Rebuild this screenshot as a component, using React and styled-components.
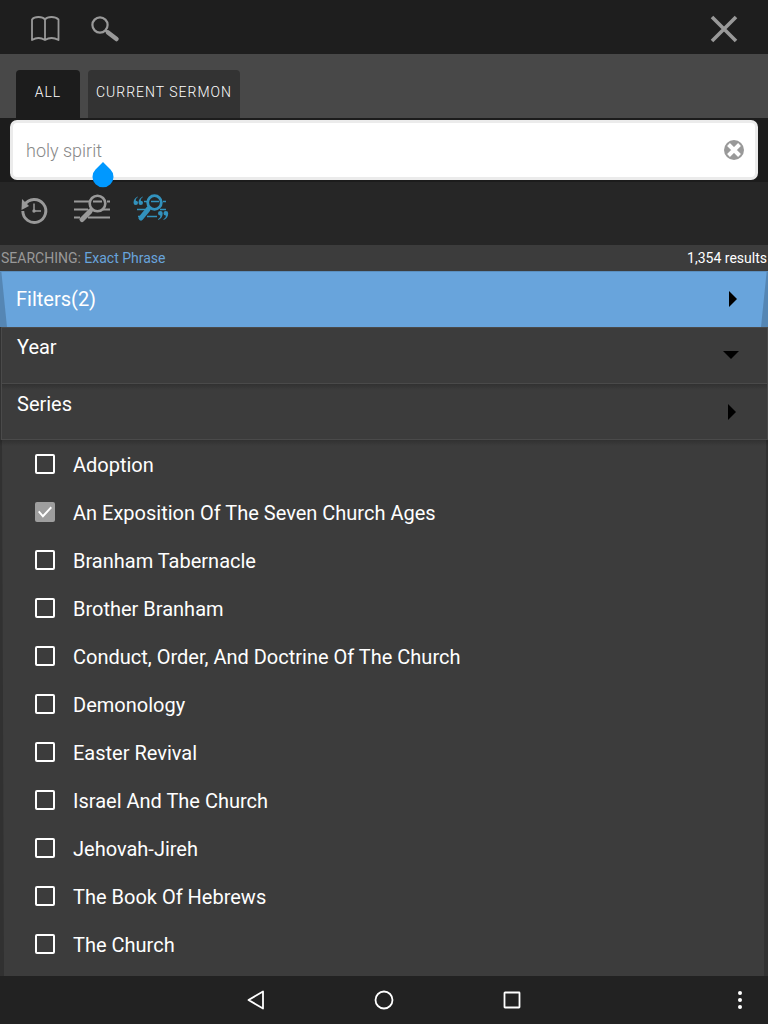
import React, { useState } from "react"
import styled, { createGlobalStyle, css } from "styled-components"

const GlobalStyle = createGlobalStyle`
  * {
    box-sizing: border-box;
  }
  body {
    margin: 0;
    background: #3c3c3c;
    color: #fff;
    font-family: Roboto, "Liberation Sans", sans-serif;
  }
  button, input {
    font-family: inherit;
  }
`

const Page = styled.div`
  display: flex;
  flex-direction: column;
  min-height: 100vh;
`

const TopBar = styled.header`
  display: flex;
  align-items: center;
  height: 54px;
  padding: 4px 28px 0;
  gap: 26px;
  background: #1e1e1e;
`

const IconButton = styled.button`
  display: flex;
  padding: 0;
  border: none;
  background: none;
  color: ${props => (props.$active ? "#3292bd" : "#999")};
  cursor: pointer;
  &:last-child {
    margin-left: ${props => (props.$end ? "auto" : "0")};
  }
`

const Tabs = styled.nav`
  display: flex;
  gap: 8px;
  padding: 16px 16px 0;
  background: #484848;
`

const Tab = styled.button`
  height: 48px;
  min-width: 64px;
  padding: 0 8px 4px;
  border: none;
  border-radius: 4px 4px 0 0;
  background: ${props => (props.$active ? "#1c1c1c" : "#333")};
  color: #fff;
  font-size: 14px;
  font-weight: 300;
  letter-spacing: 1px;
  text-transform: uppercase;
`

const SearchArea = styled.div`
  padding: 2px 10px;
  background: #1c1c1c;
`

const SearchField = styled.div`
  position: relative;
  display: flex;
  align-items: center;
  height: 60px;
  padding: 0 10px 0 13px;
  border: 3px solid #ebebeb;
  border-radius: 7px;
  background: #fff;
`

const SearchInput = styled.input`
  flex: 1;
  min-width: 0;
  padding: 0;
  border: none;
  outline: none;
  background: none;
  color: #888;
  font-size: 18px;
  font-weight: 300;
`

const CursorHandle = styled.svg`
  position: absolute;
  top: 39px;
  left: 79px;
  z-index: 1;
`

const Tools = styled.div`
  display: flex;
  align-items: flex-start;
  gap: 22px;
  height: 63px;
  padding: 11px 19px 0;
  background: #262626;
`

const Status = styled.div`
  display: flex;
  justify-content: space-between;
  height: 26px;
  padding: 0 1px;
  color: #999;
  font-size: 14px;
  line-height: 26px;
`

const Mode = styled.span`
  color: #68a4dc;
`

const Results = styled.span`
  color: #fff;
`

const edges = css`
  position: relative;
  &::before,
  &::after {
    content: "";
    position: absolute;
    top: 0;
    bottom: 0;
    left: 0;
    width: ${props => props.$edge}px;
    background: rgba(0, 0, 0, 0.18);
    clip-path: polygon(0 0, ${props => props.$top} 0, 100% 100%, 0 100%);
  }
  &::after {
    left: auto;
    right: 0;
    transform: scaleX(-1);
  }
`

const FilterBar = styled.button`
  ${edges}
  display: flex;
  align-items: center;
  justify-content: space-between;
  height: 56px;
  padding: 0 28px 2px 16px;
  border: none;
  border-top: 1px solid #5b8fbf;
  background: #68a4dc;
  color: #fff;
  font-size: 20px;
`

const Section = styled.button`
  display: flex;
  justify-content: space-between;
  height: ${props => (props.$first ? "57px" : "56px")};
  margin: 0 0 0 1px;
  padding: ${props => (props.$first ? "7px" : "8px")} 28px 0 15px;
  border: 1px solid #4a4a4a;
  border-width: ${props => (props.$first ? "1px" : "0 1px 1px")};
  background: ${props =>
    props.$first ? "#3c3c3c" : "linear-gradient(#313131, #3c3c3c 6px)"};
  color: #fff;
  font-size: 20px;
  line-height: 24px;
  text-align: left;
  svg {
    margin-top: 12px;
  }
`

const SectionGroup = styled.div`
  display: flex;
  flex-direction: column;
  background: #323232;
`

const SeriesList = styled.ul`
  ${edges}
  flex: 1;
  margin: 0;
  padding: 0 0 8px;
  list-style: none;
  background: linear-gradient(#313131, #3c3c3c 6px);
`

const SeriesItem = styled.label`
  display: flex;
  align-items: center;
  gap: 18px;
  height: 48px;
  padding-left: 35px;
  font-size: 20px;
  line-height: 24px;
  cursor: pointer;
`

const SeriesName = styled.span`
  padding-top: 2px;
`

const Checkbox = styled.input`
  display: grid;
  place-items: center;
  width: 20px;
  height: 20px;
  margin: 0;
  appearance: none;
  border: 2px solid #fff;
  border-radius: 2px;
  &:checked {
    border-color: #9e9e9e;
    background: #9e9e9e;
  }
  &:checked::before {
    content: "";
    width: 14px;
    height: 12px;
    background: #fff;
    clip-path: polygon(0 50%, 10% 40%, 35% 72%, 90% 5%, 100% 16%, 35% 97%);
  }
`

const SystemBar = styled.footer`
  display: grid;
  grid-template-columns: 1fr repeat(3, 128px) 1fr;
  place-items: center;
  height: 48px;
  background: #222;
  color: #fff;
  button {
    color: #fff;
  }
  button:first-child {
    grid-column: 2;
  }
  button:last-child {
    justify-self: end;
    margin-right: 16px;
  }
`

const BookIcon = () => (
  <svg width="34" height="30" viewBox="0 0 34 30" fill="none" stroke="currentColor" strokeWidth="1.8" strokeLinejoin="round">
    <path d="M17 5.500C15.500 3.500 13 3 10.500 3C8 3 5.500 3.500 4 5.500V26C8 23.500 13 23.500 17 26C21 23.500 26 23.500 30.500 26V5.500C28.500 3.500 26 3 23.500 3C21 3 18.500 3.500 17 5.500V26" />
  </svg>
)

const SearchIcon = () => (
  <svg width="32" height="30" viewBox="0 0 32 30" fill="none" stroke="currentColor">
    <circle cx="12" cy="11" r="7.6" strokeWidth="2.200" />
    <path d="M17.500 16.500L20 18.500" strokeWidth="2.500" />
    <path d="M20 18.500L28.500 25" strokeWidth="4.500" strokeLinecap="round" />
  </svg>
)

const CloseIcon = () => (
  <svg width="32" height="32" viewBox="0 0 32 32" stroke="currentColor" strokeWidth="3.600">
    <path d="M4 4L28 28M28 4L4 28" />
  </svg>
)

const ClearIcon = () => (
  <svg width="22" height="22" viewBox="0 0 22 22">
    <circle cx="11" cy="11" r="10" fill="currentColor" />
    <path d="M5.500 5.500L16.500 16.500M16.500 5.500L5.500 16.500" stroke="#fff" strokeWidth="4" />
  </svg>
)

const HistoryIcon = () => (
  <svg width="32" height="34" viewBox="0 0 32 34" fill="none" stroke="currentColor">
    <path d="M5.600 11.800A11.500 11.500 0 1 1 3.800 18" strokeWidth="2.900" />
    <path d="M3 6L10 13L2.500 17Z" fill="currentColor" stroke="none" />
    <path d="M15 10.500V18M15 18H22" strokeWidth="1.500" />
    <circle cx="15" cy="18" r="1.700" fill="currentColor" stroke="none" />
  </svg>
)

const LinesSearchIcon = () => (
  <svg width="38" height="34" viewBox="0 0 38 34" fill="none" stroke="currentColor">
    <path d="M1 8.500H16M20 8.500H29M34 8.500H37M1 16.500H15M30 16.500H37M1 24.500H7M15 24.500H37" strokeWidth="1.800" />
    <circle cx="24.500" cy="10.500" r="7.800" strokeWidth="2.600" />
    <path d="M19 16L16.500 18.500" strokeWidth="4" />
    <path d="M17 18.500L9 26.500" strokeWidth="5" strokeLinecap="round" />
  </svg>
)

const Quote = ({ transform }) => (
  <path
    transform={transform}
    d="M0 2.300A2.300 2.300 0 0 1 4.700 2.300C4.800 5.500 3 8 0 9V8.300C1.800 7.200 2.600 5.800 2.300 4.600A2.300 2.300 0 0 1 0 2.300Z"
    fill="currentColor"
    stroke="none"
  />
)

const PhraseSearchIcon = () => (
  <svg width="38" height="34" viewBox="0 0 38 34" fill="none" stroke="currentColor">
    <path d="M11 8.500H14M18 8.500H26M30 8.500H33M4 16.500H14M27 16.500H33M5 23.500H7M14 23.500H24" strokeWidth="1.600" />
    <circle cx="21.500" cy="9.500" r="6.800" strokeWidth="2.800" />
    <path d="M16.500 14.500L14 17" strokeWidth="4" />
    <path d="M15 16.500L8 25" strokeWidth="5" strokeLinecap="round" />
    <Quote transform="translate(5 12) rotate(180) scale(0.95)" />
    <Quote transform="translate(10 12) rotate(180) scale(0.95)" />
    <Quote transform="translate(25 18)" />
    <Quote transform="translate(30.500 18)" />
  </svg>
)

const Caret = ({ down }) =>
  down ? (
    <svg width="16" height="16" viewBox="0 0 16 16">
      <path d="M0 4H16L8 12Z" />
    </svg>
  ) : (
    <svg width="16" height="16" viewBox="0 0 16 16">
      <path d="M5 0V16L13 8Z" />
    </svg>
  )

const SERIES = [
  "Adoption",
  "An Exposition Of The Seven Church Ages",
  "Branham Tabernacle",
  "Brother Branham",
  "Conduct, Order, And Doctrine Of The Church",
  "Demonology",
  "Easter Revival",
  "Israel And The Church",
  "Jehovah-Jireh",
  "The Book Of Hebrews",
  "The Church",
]

const App = () => {
  const [query, setQuery] = useState("holy spirit")

  return (
    <Page>
      <GlobalStyle />
      <TopBar>
        <IconButton aria-label="Library"><BookIcon /></IconButton>
        <IconButton aria-label="Search"><SearchIcon /></IconButton>
        <IconButton aria-label="Close" $end><CloseIcon /></IconButton>
      </TopBar>
      <Tabs>
        <Tab $active>All</Tab>
        <Tab>Current Sermon</Tab>
      </Tabs>
      <SearchArea>
        <SearchField>
          <SearchInput
            aria-label="Search text"
            value={query}
            onChange={e => setQuery(e.target.value)}
          />
          <IconButton aria-label="Clear" onClick={() => setQuery("")}>
            <ClearIcon />
          </IconButton>
          <CursorHandle width="22" height="26" viewBox="0 0 22 26">
            <path d="M11 0L18.500 7.500A10.500 10.500 0 1 1 3.500 7.500Z" fill="#0098ff" />
          </CursorHandle>
        </SearchField>
      </SearchArea>
      <Tools>
        <IconButton aria-label="History"><HistoryIcon /></IconButton>
        <IconButton aria-label="All words"><LinesSearchIcon /></IconButton>
        <IconButton aria-label="Exact phrase" $active><PhraseSearchIcon /></IconButton>
      </Tools>
      <Status>
        <span>SEARCHING: <Mode>Exact Phrase</Mode></span>
        <Results>1,354 results</Results>
      </Status>
      <FilterBar $edge={7} $top="20%">
        Filters(2)
        <Caret />
      </FilterBar>
      <SectionGroup>
        <Section $first>
          Year
          <Caret down />
        </Section>
        <Section>
          Series
          <Caret />
        </Section>
      </SectionGroup>
      <SeriesList $edge={4} $top="50%">
        {SERIES.map(name => (
          <li key={name}>
            <SeriesItem>
              <Checkbox type="checkbox" defaultChecked={name.startsWith("An Exposition")} />
              <SeriesName>{name}</SeriesName>
            </SeriesItem>
          </li>
        ))}
      </SeriesList>
      <SystemBar>
        <IconButton aria-label="Back">
          <svg width="20" height="20" viewBox="0 0 20 20" fill="none" stroke="currentColor" strokeWidth="1.800" strokeLinejoin="round">
            <path d="M17 1.500V18.500L2.500 10Z" />
          </svg>
        </IconButton>
        <IconButton aria-label="Home">
          <svg width="20" height="20" viewBox="0 0 20 20" fill="none" stroke="currentColor" strokeWidth="1.800">
            <circle cx="10" cy="10" r="8.500" />
          </svg>
        </IconButton>
        <IconButton aria-label="Recent apps">
          <svg width="20" height="20" viewBox="0 0 20 20" fill="none" stroke="currentColor" strokeWidth="1.800">
            <rect x="2.500" y="2.500" width="15" height="15" rx="0.500" />
          </svg>
        </IconButton>
        <IconButton aria-label="More options">
          <svg width="24" height="24" viewBox="0 0 24 24" fill="currentColor">
            <circle cx="12" cy="5" r="2" />
            <circle cx="12" cy="12" r="2" />
            <circle cx="12" cy="19" r="2" />
          </svg>
        </IconButton>
      </SystemBar>
    </Page>
  )
}

export default App
